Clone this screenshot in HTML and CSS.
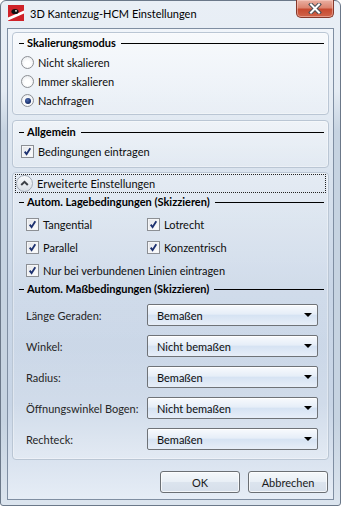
FILE: index.html
```html
<!DOCTYPE html>
<html>
<head>
  <meta charset="utf-8">
  <title>3D Kantenzug-HCM Einstellungen</title>
  <link rel="stylesheet" href="styles.css">
</head>
<body>
  <div class="window">
    <div class="titlebar">
      <svg class="app-icon" width="16" height="16" viewBox="0 0 16 16">
        <rect width="16" height="16" fill="#cf2229"/>
        <path d="M0 12.5 L16 5.5 L16 8.5 L0 15.5 Z" fill="#fff"/>
        <ellipse cx="7" cy="6.5" rx="3.6" ry="2.6" fill="#111"/>
        <circle cx="8" cy="5.8" r="0.9" fill="#fff"/>
      </svg>
      <span class="title">3D Kantenzug-HCM Einstellungen</span>
      <div class="close-btn">
        <svg width="14" height="11" viewBox="0 0 14 11">
          <path d="M3 1.5 L11 9.5 M11 1.5 L3 9.5" stroke="#4b4f55" stroke-width="4" stroke-linecap="square"/>
          <path d="M3 1.5 L11 9.5 M11 1.5 L3 9.5" stroke="#fff" stroke-width="2" stroke-linecap="square"/>
        </svg>
      </div>
    </div>

    <div class="client">
      <section class="panel panel-scale">
        <div class="group-head"><span class="dash"></span><span class="head-text">Skalierungsmodus</span><span class="rule"></span></div>
        <div class="option-list">
          <div class="option"><span class="radio"></span>Nicht skalieren</div>
          <div class="option"><span class="radio"></span>Immer skalieren</div>
          <div class="option"><span class="radio checked"></span>Nachfragen</div>
        </div>
      </section>

      <section class="panel panel-general">
        <div class="group-head"><span class="dash"></span><span class="head-text">Allgemein</span><span class="rule"></span></div>
        <div class="option-list">
          <div class="option"><span class="check"><svg viewBox="0 0 13 13"><path d="M3.2 6.6 L5.4 9.6 L9.8 2.6"/></svg></span>Bedingungen eintragen</div>
        </div>
      </section>

      <section class="panel panel-advanced">
        <div class="expander">
          <span class="exp-icon"><svg width="17" height="17" viewBox="0 0 17 17"><path d="M5.2 10 L8.5 6.8 L11.8 10"/></svg></span>
          Erweiterte Einstellungen
        </div>

        <div class="group-head"><span class="dash"></span><span class="head-text">Autom. Lagebedingungen (Skizzieren)</span><span class="rule"></span></div>
        <div class="check-grid">
          <div class="option"><span class="check"><svg viewBox="0 0 13 13"><path d="M3.2 6.6 L5.4 9.6 L9.8 2.6"/></svg></span>Tangential</div>
          <div class="option"><span class="check"><svg viewBox="0 0 13 13"><path d="M3.2 6.6 L5.4 9.6 L9.8 2.6"/></svg></span>Lotrecht</div>
          <div class="option"><span class="check"><svg viewBox="0 0 13 13"><path d="M3.2 6.6 L5.4 9.6 L9.8 2.6"/></svg></span>Parallel</div>
          <div class="option"><span class="check"><svg viewBox="0 0 13 13"><path d="M3.2 6.6 L5.4 9.6 L9.8 2.6"/></svg></span>Konzentrisch</div>
          <div class="option wide"><span class="check"><svg viewBox="0 0 13 13"><path d="M3.2 6.6 L5.4 9.6 L9.8 2.6"/></svg></span>Nur bei verbundenen Linien eintragen</div>
        </div>

        <div class="group-head"><span class="dash"></span><span class="head-text">Autom. Maßbedingungen (Skizzieren)</span><span class="rule"></span></div>
        <div class="dim-rows">
          <div class="dim-row"><span class="dim-label">Länge Geraden:</span><div class="combo"><span>Bemaßen</span><i class="arrow"></i></div></div>
          <div class="dim-row"><span class="dim-label">Winkel:</span><div class="combo"><span>Nicht bemaßen</span><i class="arrow"></i></div></div>
          <div class="dim-row"><span class="dim-label">Radius:</span><div class="combo"><span>Bemaßen</span><i class="arrow"></i></div></div>
          <div class="dim-row"><span class="dim-label">Öffnungswinkel Bogen:</span><div class="combo"><span>Nicht bemaßen</span><i class="arrow"></i></div></div>
          <div class="dim-row"><span class="dim-label">Rechteck:</span><div class="combo"><span>Bemaßen</span><i class="arrow"></i></div></div>
        </div>
      </section>

      <div class="buttons">
        <button class="btn">OK</button>
        <button class="btn">Abbrechen</button>
      </div>
    </div>
  </div>
</body>
</html>
```

FILE: styles.css
```css
* {
  box-sizing: border-box;
}

body {
  margin: 0;
  font-family: Lato, "Open Sans", sans-serif;
  font-size: 11px;
  color: #0d0d0d;
  background: #fff;
}

.window {
  width: 341px;
  height: 506px;
  border: 1px solid #6b7889;
  border-radius: 6px 6px 3px 3px;
  padding: 0 6px 5px;
  background: linear-gradient(to bottom, #e9eff6 0, #e4ebf3 90px, #c6d3e1 130px, #c6d3e1 420px, #dbe4ee 500px);
  display: flex;
  flex-direction: column;
}

/* title bar */
.titlebar {
  height: 27px;
  display: flex;
  align-items: flex-start;
}

.app-icon {
  margin: 4px 0 0 1px;
  flex: none;
}

.title {
  margin: 5px 0 0 6px;
  font-size: 11px;
  line-height: 16px;
  color: #000;
}

.close-btn {
  margin: -1px 0 0 auto;
  width: 38px;
  height: 18px;
  border: 1px solid #86382b;
  border-top: none;
  border-radius: 0 0 5px 5px;
  background: linear-gradient(to bottom, #eab0a2 0%, #dc8570 45%, #c74a30 55%, #d0644a 100%);
  box-shadow: inset 0 0 0 1px rgba(255, 220, 210, 0.45);
  display: flex;
  align-items: center;
  justify-content: center;
}

/* client area */
.client {
  height: 472px;
  border: 1px solid #7f8ea2;
  padding: 3px 4px 6px;
  background: linear-gradient(to bottom, #f1f5fa 0%, #dde6f0 25%, #c9d6e7 55%, #c8d5e6 80%, #e6edf6 100%);
  display: flex;
  flex-direction: column;
}

.panel {
  border: 1px solid #bac6d4;
  border-radius: 4px;
  padding: 0 2px;
  background: linear-gradient(to bottom, rgba(255, 255, 255, 0.45), rgba(255, 255, 255, 0.2));
  box-shadow: inset 0 0 0 1px rgba(255, 255, 255, 0.35);
}

.panel-scale {
  height: 83px;
  padding-top: 2px;
}

.panel-general {
  height: 48px;
  margin-top: 5px;
  padding-top: 3px;
}

.panel-advanced {
  height: 288px;
  margin-top: 4px;
  padding-top: 1px;
  background: linear-gradient(to bottom, rgba(255, 255, 255, 0.3), rgba(255, 255, 255, 0.05) 60%, rgba(255, 255, 255, 0.25));
}

/* group header: dash, bold text, rule */
.group-head {
  height: 16px;
  margin: 0 2px 0 4px;
  display: flex;
  align-items: center;
}

.dash {
  width: 5px;
  height: 1px;
  background: #000;
  flex: none;
}

.head-text {
  margin: 0 5px 0 3px;
  font-weight: bold;
  line-height: 16px;
  color: #000;
  white-space: nowrap;
}

.rule {
  flex: 1;
  height: 1px;
  background: #000;
}

.option-list {
  margin: 2px 0 0 6px;
}

.option {
  height: 19px;
  display: flex;
  align-items: center;
  gap: 4px;
  white-space: nowrap;
}

.radio {
  width: 13px;
  height: 13px;
  border: 1px solid #8c8f94;
  border-radius: 50%;
  background: radial-gradient(circle at 50% 60%, #ffffff 30%, #e3e6ea 100%);
  display: flex;
  align-items: center;
  justify-content: center;
  flex: none;
}

.radio.checked::after {
  content: "";
  width: 6px;
  height: 6px;
  border-radius: 50%;
  background: radial-gradient(circle at 40% 35%, #4e6cb0, #132a66 70%);
}

.check {
  width: 13px;
  height: 13px;
  border: 1px solid #8c8f94;
  background: linear-gradient(135deg, #e2e4e8, #ffffff);
  box-shadow: inset 0 0 0 1px #f5f6f8;
  flex: none;
}

.check svg {
  display: block;
  width: 11px;
  height: 11px;
}

.check path {
  fill: none;
  stroke: #1d3170;
  stroke-width: 2.2;
}

/* expander row */
.expander {
  height: 19px;
  border: 1px dotted #222;
  display: flex;
  align-items: center;
  gap: 4px;
  padding-left: 0;
}

.exp-icon {
  width: 17px;
  height: 17px;
  border: 1px solid #a3abb6;
  border-radius: 50%;
  background: linear-gradient(to bottom, #f7f9fb, #d9dfe6);
  flex: none;
  display: flex;
}

.exp-icon svg {
  margin: -1px;
}

.exp-icon path {
  fill: none;
  stroke: #3b3f45;
  stroke-width: 2;
}

.panel-advanced .group-head {
  margin-top: 1px;
}

.check-grid {
  margin: 5px 0 0 11px;
  display: grid;
  grid-template-columns: 121px 1fr;
  row-gap: 4px;
}

.check-grid .wide {
  grid-column: span 2;
}

.dim-rows {
  margin: 7px 8px 0 11px;
  display: flex;
  flex-direction: column;
  gap: 9px;
}

.dim-row {
  height: 22px;
  display: flex;
  align-items: center;
}

.dim-label {
  width: 121px;
  color: #262626;
}

.combo {
  flex: 1;
  height: 22px;
  border: 1px solid #6f7378;
  border-radius: 2px;
  padding: 0 4px 0 9px;
  background: linear-gradient(to bottom, #f8fafd 0%, #e6eef8 45%, #d6e3f3 52%, #e7eef8 100%);
  box-shadow: inset 0 1px 0 #fff;
  display: flex;
  align-items: center;
  justify-content: space-between;
}

.arrow {
  width: 0;
  height: 0;
  border-left: 4px solid transparent;
  border-right: 4px solid transparent;
  border-top: 4px solid #000;
  margin-right: 1px;
}

/* dialog buttons */
.buttons {
  margin-top: auto;
  padding-right: 1px;
  display: flex;
  justify-content: flex-end;
  gap: 8px;
}

.btn {
  width: 80px;
  height: 22px;
  border: 1px solid #6b6f74;
  border-radius: 3px;
  background: linear-gradient(to bottom, #f5f8fb 0%, #e9eff6 48%, #dce4ee 52%, #d6dfea 100%);
  box-shadow: inset 0 0 0 1px rgba(255, 255, 255, 0.7);
  font-family: inherit;
  font-size: 11px;
  color: #1a1a1a;
  padding: 0;
}
```
